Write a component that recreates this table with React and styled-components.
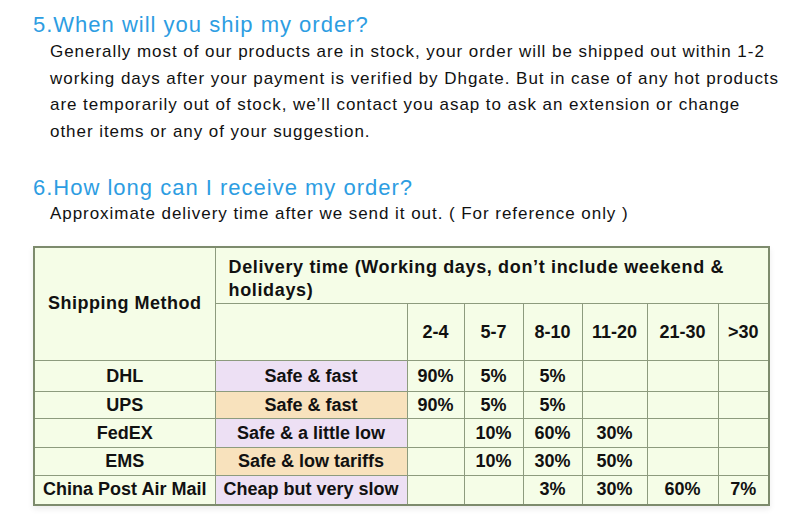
import React from "react";
import styled, { createGlobalStyle } from "styled-components";

const Global = createGlobalStyle`
  html, body { margin: 0; padding: 0; background: #fff; }
  body { font-family: "Liberation Sans", Arial, sans-serif; }
`;

const Page = styled.div`
  width: 800px;
  height: 516px;
  overflow: hidden;
  padding: 12px 0 0 33px;
  box-sizing: border-box;
  background: #fff;
`;

const Title = styled.h2`
  margin: ${(p) => p.$mt || 0}px 0 0 0;
  font-family: "Liberation Sans", Arial, sans-serif;
  font-weight: 400;
  font-size: 22px;
  line-height: 26px;
  letter-spacing: 1px;
  color: #2d9de2;
`;

const Para = styled.p`
  margin: ${(p) => p.$mt || 0}px 0 0 17px;
  font-size: 17px;
  line-height: 26.5px;
  letter-spacing: 0.95px;
  color: #111;
  white-space: nowrap;
`;

const Table = styled.table`
  margin-top: ${(p) => p.$mt || 0}px;
  border-collapse: collapse;
  table-layout: fixed;
  width: 735px;
  background: #f5fde7;
  border: 2px solid #7d8b6d;
  box-shadow: 0 3px 6px rgba(0, 0, 0, 0.08);
  font-family: "Liberation Sans", Arial, sans-serif;
  font-weight: 700;
  font-size: 18px;
  color: #111;
`;

const Cell = styled.td`
  border: 1px solid #8d9b7e;
  padding: 0;
  text-align: ${(p) => p.$align || "center"};
  vertical-align: ${(p) => p.$valign || "middle"};
  letter-spacing: ${(p) => (p.$head ? "0.5px" : "0")};
  background: ${(p) =>
    p.$tone === "purple" ? "#ede0f4" : p.$tone === "orange" ? "#f8e2bd" : "transparent"};
  white-space: nowrap;
`;

const HeadNote = styled.div`
  padding: 8px 20px 0 13px;
  line-height: 23px;
  letter-spacing: 0.65px;
  white-space: normal;
  text-align: left;
`;

const Row = styled.tr`
  height: ${(p) => p.$h}px;
`;

const ranges = ["2-4", "5-7", "8-10", "11-20", "21-30", ">30"];

const rows = [
  { name: "DHL", note: "Safe & fast", tone: "purple", h: 31, v: ["90%", "5%", "5%", "", "", ""] },
  { name: "UPS", note: "Safe & fast", tone: "orange", h: 27, v: ["90%", "5%", "5%", "", "", ""] },
  { name: "FedEX", note: "Safe & a little low", tone: "purple", h: 29, v: ["", "10%", "60%", "30%", "", ""] },
  { name: "EMS", note: "Safe & low tariffs", tone: "orange", h: 28, v: ["", "10%", "30%", "50%", "", ""] },
  { name: "China Post Air Mail", note: "Cheap but very slow", tone: "purple", h: 29, v: ["", "", "3%", "30%", "60%", "7%"] },
];

const widths = [181, 192, 57, 59, 59, 65, 71, 51];

export default function App() {
  return (
    <Page>
      <Global />
      <Title>5.When will you ship my order?</Title>
      <Para $mt={1}>
        Generally most of our products are in stock, your order will be shipped out within 1-2
        <br />
        working days after your payment is verified by Dhgate. But in case of any hot products
        <br />
        are temporarily out of stock, we’ll contact you asap to ask an extension or change
        <br />
        other items or any of your suggestion.
      </Para>
      <Title $mt={30}>6.How long can I receive my order?</Title>
      <Para>Approximate delivery time after we send it out. ( For reference only )</Para>
      <Table $mt={18}>
        <colgroup>
          {widths.map((w, i) => (
            <col key={i} style={{ width: w }} />
          ))}
        </colgroup>
        <tbody>
          <Row $h={57}>
            <Cell rowSpan={2} $head>
              Shipping Method
            </Cell>
            <Cell colSpan={7} $valign="top">
              <HeadNote>Delivery time (Working days, don’t include weekend &amp; holidays)</HeadNote>
            </Cell>
          </Row>
          <Row $h={57}>
            <Cell />
            {ranges.map((r) => (
              <Cell key={r}>{r}</Cell>
            ))}
          </Row>
          {rows.map((r) => (
            <Row key={r.name} $h={r.h}>
              <Cell>{r.name}</Cell>
              <Cell $tone={r.tone}>{r.note}</Cell>
              {r.v.map((v, i) => (
                <Cell key={i}>{v}</Cell>
              ))}
            </Row>
          ))}
        </tbody>
      </Table>
    </Page>
  );
}
